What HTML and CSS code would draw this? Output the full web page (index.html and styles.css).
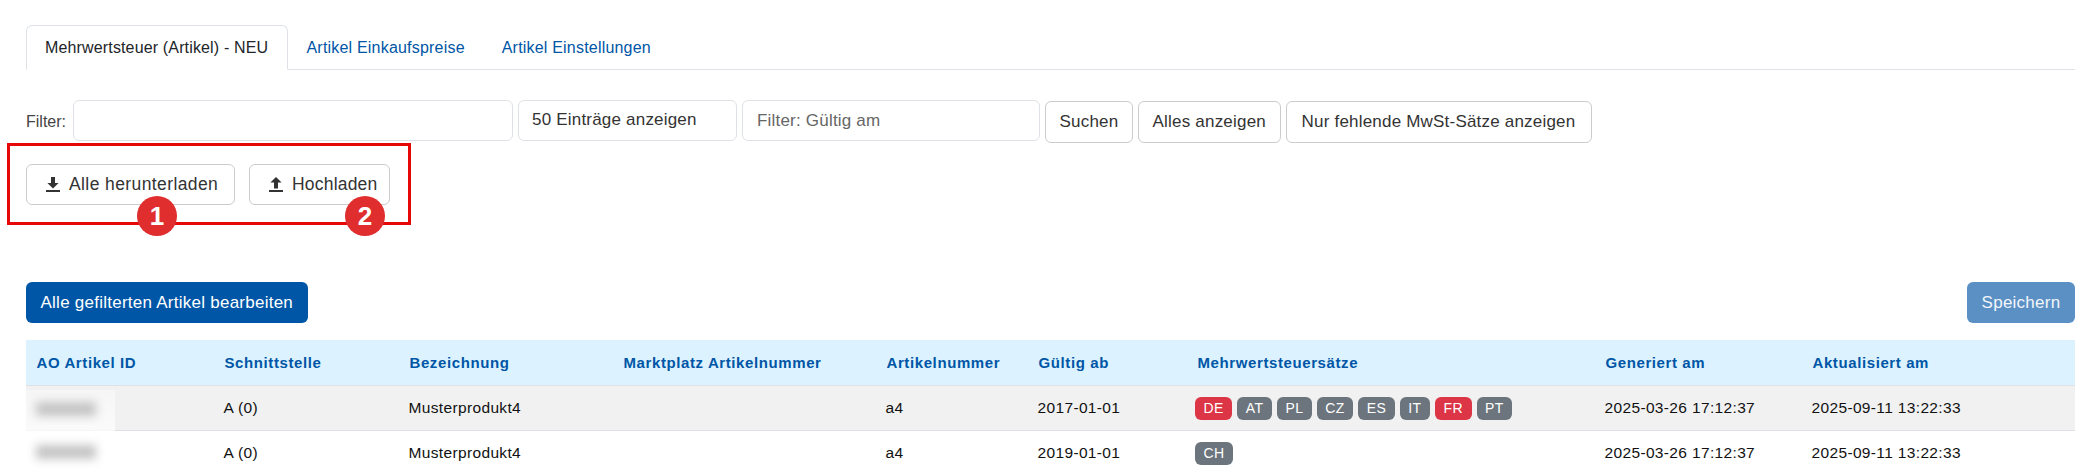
FILE: index.html
```html
<!DOCTYPE html>
<html lang="de">
<head>
    <meta charset="UTF-8">
    <meta name="viewport" content="width=device-width, initial-scale=1.0">
    <title>Mehrwertsteuer (Artikel)</title>
    <link rel="stylesheet" href="styles.css">
</head>
<body>
    <ul class="tabs">
        <li class="tab active">Mehrwertsteuer (Artikel) - NEU</li>
        <li class="tab">Artikel Einkaufspreise</li>
        <li class="tab">Artikel Einstellungen</li>
    </ul>

    <div class="filter-row">
        <label class="filter-label" for="filterText">Filter:</label>
        <input class="field field-text" id="filterText" type="text">
        <div class="field field-select">50 Einträge anzeigen</div>
        <input class="field field-date" type="text" placeholder="Filter: Gültig am">
        <button class="btn btn-suchen">Suchen</button>
        <button class="btn btn-alles">Alles anzeigen</button>
        <button class="btn btn-fehlend">Nur fehlende MwSt-Sätze anzeigen</button>
    </div>

    <div class="transfer-row">
        <button class="btn btn-transfer btn-download">
            <svg class="icon" viewBox="0 0 14 15"><path d="M5 0h4v6h3.6L7 11.4 1.4 6H5zM0 13h14v2H0z"/></svg>
            Alle herunterladen
        </button>
        <button class="btn btn-transfer btn-upload">
            <svg class="icon" viewBox="0 0 14 15"><path d="M7 0l5.6 5.4H9v6H5v-6H1.4zM0 13h14v2H0z"/></svg>
            Hochladen
        </button>
        <div class="callout"></div>
        <div class="marker marker-one">1</div>
        <div class="marker marker-two">2</div>
    </div>

    <div class="action-row">
        <button class="btn-solid">Alle gefilterten Artikel bearbeiten</button>
        <button class="btn-solid btn-disabled">Speichern</button>
    </div>

    <table class="articles">
        <colgroup>
            <col class="col-id">
            <col class="col-api">
            <col class="col-name">
            <col class="col-market">
            <col class="col-number">
            <col class="col-valid">
            <col class="col-rates">
            <col class="col-generated">
            <col class="col-updated">
        </colgroup>
        <thead>
            <tr>
                <th>AO Artikel ID</th>
                <th>Schnittstelle</th>
                <th>Bezeichnung</th>
                <th>Marktplatz Artikelnummer</th>
                <th>Artikelnummer</th>
                <th>Gültig ab</th>
                <th>Mehrwertsteuersätze</th>
                <th>Generiert am</th>
                <th>Aktualisiert am</th>
            </tr>
        </thead>
        <tbody>
            <tr class="striped">
                <td class="cell-id">
                    <div class="veil">
                        <div class="smudge"></div>
                        <div class="smudge"></div>
                    </div>
                </td>
                <td>A (0)</td>
                <td>Musterprodukt4</td>
                <td></td>
                <td>a4</td>
                <td>2017-01-01</td>
                <td>
                    <div class="badges">
                        <span class="badge red">DE</span>
                        <span class="badge">AT</span>
                        <span class="badge">PL</span>
                        <span class="badge">CZ</span>
                        <span class="badge">ES</span>
                        <span class="badge">IT</span>
                        <span class="badge red">FR</span>
                        <span class="badge">PT</span>
                    </div>
                </td>
                <td>2025-03-26 17:12:37</td>
                <td>2025-09-11 13:22:33</td>
            </tr>
            <tr>
                <td></td>
                <td>A (0)</td>
                <td>Musterprodukt4</td>
                <td></td>
                <td>a4</td>
                <td>2019-01-01</td>
                <td>
                    <div class="badges">
                        <span class="badge">CH</span>
                    </div>
                </td>
                <td>2025-03-26 17:12:37</td>
                <td>2025-09-11 13:22:33</td>
            </tr>
        </tbody>
    </table>
</body>
</html>
```

FILE: styles.css
```css
html, body {
    height: 474px;
    overflow: hidden;
}
body {
    margin: 0;
    padding: 25px 22px 0 26px;
    box-sizing: border-box;
    background: #fff;
    font-family: "Liberation Sans", Arial, sans-serif;
    color: #212529;
}
button, input {
    font-family: inherit;
    margin: 0;
}

/* tabs */
.tabs {
    display: flex;
    list-style: none;
    margin: 0;
    padding: 0;
    height: 45px;
    box-sizing: border-box;
    border-bottom: 1px solid #dee2e6;
}
.tab {
    height: 45px;
    box-sizing: border-box;
    padding: 0 17.5px;
    line-height: 43px;
    font-size: 16px;
    letter-spacing: 0.2px;
    color: #0056a6;
    white-space: nowrap;
    border: 1px solid transparent;
}
.tab.active {
    width: 262px;
    padding-left: 18px;
    letter-spacing: 0.15px;
    color: #212529;
    background: #fff;
    border-color: #dee2e6 #dee2e6 #fff;
    border-radius: 6px 6px 0 0;
}

/* filter row */
.filter-row {
    display: flex;
    align-items: flex-start;
    margin-top: 30px;
    height: 43px;
}
.filter-label {
    width: 47px;
    line-height: 43px;
    font-size: 16px;
    color: #444;
}
.field {
    height: 41px;
    box-sizing: border-box;
    border: 1px solid #dee2e6;
    border-radius: 6px;
    background: #fff;
    font-size: 17px;
    letter-spacing: 0.2px;
    padding: 0 14px;
    outline: none;
}
.field::placeholder {
    color: #666;
    opacity: 1;
}
.field-text {
    width: 440px;
}
.field-select {
    width: 219px;
    margin-left: 5px;
    padding-left: 13px;
    line-height: 38px;
    color: #333;
}
.field-date {
    width: 298px;
    margin-left: 5px;
}
.btn {
    height: 42px;
    box-sizing: border-box;
    margin-top: 1px;
    padding: 0;
    background: #fff;
    border: 1px solid #ccc;
    border-radius: 6px;
    font-size: 17px;
    letter-spacing: 0.2px;
    color: #333;
}
.btn-suchen {
    width: 88px;
    margin-left: 5px;
}
.btn-alles {
    width: 142.5px;
    margin-left: 5px;
}
.btn-fehlend {
    width: 306px;
    margin-left: 5px;
}

/* download and upload, with the annotation on top */
.transfer-row {
    position: relative;
    display: flex;
    gap: 14.5px;
    margin-top: 21px;
    height: 41px;
}
.btn-transfer {
    display: flex;
    align-items: center;
    gap: 9px;
    height: 41px;
    margin: 0;
    padding: 0 0 0 19px;
    font-size: 17.5px;
    letter-spacing: 0.4px;
}
.btn-download {
    width: 208.5px;
}
.btn-upload {
    width: 141px;
    letter-spacing: 0.2px;
}
.icon {
    width: 14px;
    height: 15px;
    fill: #333;
}
.callout {
    position: absolute;
    left: -19px;
    top: -21px;
    width: 404px;
    height: 82px;
    box-sizing: border-box;
    border: 3px solid #e60808;
}
.marker {
    position: absolute;
    top: 32px;
    width: 40px;
    height: 40px;
    border-radius: 50%;
    background: #e02d2d;
    color: #fff;
    font-size: 26px;
    font-weight: bold;
    line-height: 40px;
    text-align: center;
}
.marker-one {
    left: 111px;
}
.marker-two {
    left: 319px;
}

/* action row */
.action-row {
    display: flex;
    justify-content: space-between;
    margin-top: 77px;
}
.btn-solid {
    height: 41px;
    padding: 0 14.5px;
    border: 0;
    border-radius: 6px;
    background: #0056a6;
    color: #fff;
    font-size: 17px;
    letter-spacing: 0.25px;
}
.btn-disabled {
    width: 108px;
    padding: 0;
    background: #5b90c5;
    color: #f2f6fb;
}

/* table */
.articles {
    width: 2049px;
    margin-top: 17px;
    table-layout: fixed;
    border-collapse: collapse;
    font-size: 15.5px;
}
.col-id { width: 188px; }
.col-api { width: 185px; }
.col-name { width: 214px; }
.col-market { width: 263px; }
.col-number { width: 152px; }
.col-valid { width: 159px; }
.col-rates { width: 408px; }
.col-generated { width: 207px; }
.col-updated { width: 273px; }
.articles th {
    height: 45px;
    padding: 0 10.5px;
    background: #dcf3ff;
    border-bottom: 1px solid #dee2e6;
    color: #0056a6;
    font-weight: bold;
    font-size: 15px;
    letter-spacing: 0.6px;
    text-align: left;
    white-space: nowrap;
}
.articles td {
    height: 44px;
    padding: 0 9.5px;
    border-bottom: 1px solid #dee2e6;
    color: #111;
    letter-spacing: 0.35px;
    white-space: nowrap;
}
.striped td {
    background: #f1f1f1;
}
.articles td.cell-id {
    position: relative;
}
/* redacted ids: one soft patch lying over both rows */
.veil {
    position: absolute;
    left: 0;
    top: 4px;
    z-index: 1;
    display: flex;
    flex-direction: column;
    gap: 29px;
    width: 89px;
    height: 80px;
    padding: 12px 0 0 10px;
    box-sizing: border-box;
    background: linear-gradient(rgba(255, 255, 255, 0.35), #fff);
}
.smudge {
    width: 60px;
    height: 14px;
    background: #c4c4c4;
    filter: blur(5px);
}
.badges {
    display: flex;
    gap: 5px;
    margin-left: -1.5px;
}
.badge {
    height: 23px;
    box-sizing: border-box;
    padding: 0 8.5px;
    border-radius: 6px;
    background: #6c757d;
    color: #fff;
    font-size: 14px;
    letter-spacing: 0.4px;
    line-height: 23px;
}
.badge.red {
    background: #dc3545;
}
```
